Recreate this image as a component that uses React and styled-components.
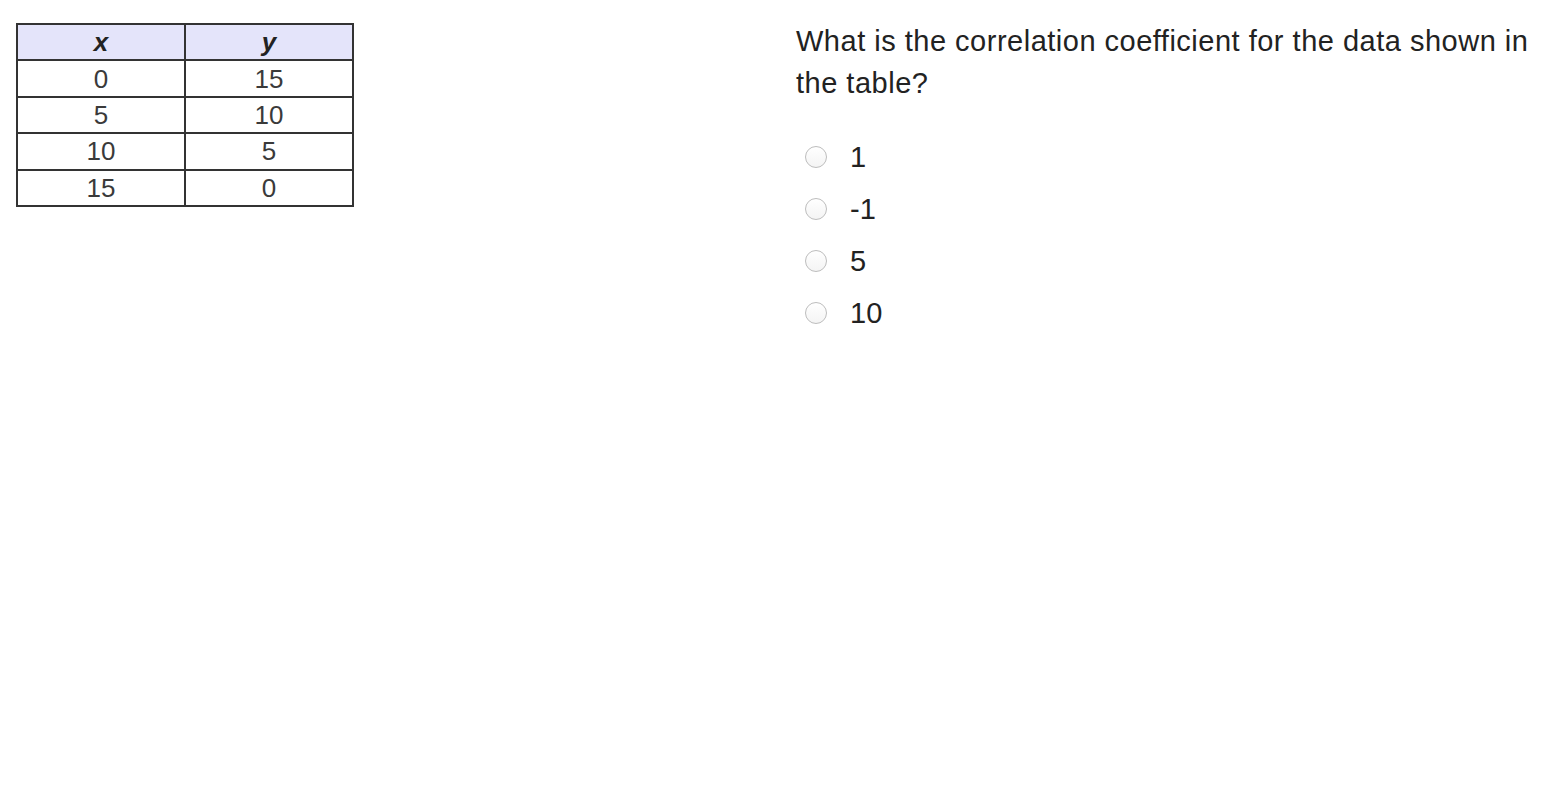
import React from "react";
import styled, { createGlobalStyle } from "styled-components";

const Global = createGlobalStyle`
  html, body { margin: 0; padding: 0; background: #fff; }
  body { font-family: "Liberation Sans", Arial, sans-serif; color: #222; }
`;

const Page = styled.div`
  display: flex;
  align-items: flex-start;
  width: 1550px;
  height: 791px;
`;

const TableWrap = styled.div`
  padding: 23px 0 0 16px;
  width: 780px;
  box-sizing: border-box;
`;

const Table = styled.table`
  border-collapse: collapse;
  border: 2px solid #333;
  font-family: "Liberation Sans", Arial, sans-serif;
  color: #3a3a3a;
`;

const Th = styled.th`
  background: #e4e4fa;
  border: 2px solid #333;
  width: 166px;
  height: 34.4px;
  padding: 0;
  font-size: 26px;
  font-weight: bold;
  font-style: italic;
  line-height: 34px;
  color: #222;
`;

const Td = styled.td`
  border: 2px solid #333;
  height: 34.4px;
  padding: 0;
  text-align: center;
  font-size: 26px;
  line-height: 34px;
`;

const Question = styled.div`
  padding-top: 20px;
  padding-left: 16px;
  width: 754px;
`;

const Prompt = styled.p`
  margin: 0;
  font-size: 29px;
  letter-spacing: 0.5px;
  line-height: 42px;
  color: #222;
  max-width: 752px;
  font-family: "Liberation Sans", Arial, sans-serif;
`;

const Options = styled.div`
  margin-top: 42px;
  display: flex;
  flex-direction: column;
  gap: 30px;
`;

const Option = styled.label`
  display: flex;
  align-items: center;
  gap: 23px;
  padding-left: 9px;
  font-size: 29px;
  line-height: 22px;
  color: #222;
`;

const Radio = styled.span`
  width: 22px;
  height: 22px;
  box-sizing: border-box;
  border-radius: 50%;
  border: 1px solid #bdbdbd;
  background: linear-gradient(#fff, #f4f4f4);
  flex: none;
`;

const rows = [
  [0, 15],
  [5, 10],
  [10, 5],
  [15, 0],
];

const answers = ["1", "-1", "5", "10"];

export default function App() {
  return (
    <>
      <Global />
      <Page>
        <TableWrap>
          <Table>
            <thead>
              <tr>
                <Th>x</Th>
                <Th>y</Th>
              </tr>
            </thead>
            <tbody>
              {rows.map(([x, y]) => (
                <tr key={x}>
                  <Td>{x}</Td>
                  <Td>{y}</Td>
                </tr>
              ))}
            </tbody>
          </Table>
        </TableWrap>
        <Question>
          <Prompt>
            What is the correlation coefficient for the data shown in the table?
          </Prompt>
          <Options>
            {answers.map((a) => (
              <Option key={a}>
                <Radio />
                {a}
              </Option>
            ))}
          </Options>
        </Question>
      </Page>
    </>
  );
}
